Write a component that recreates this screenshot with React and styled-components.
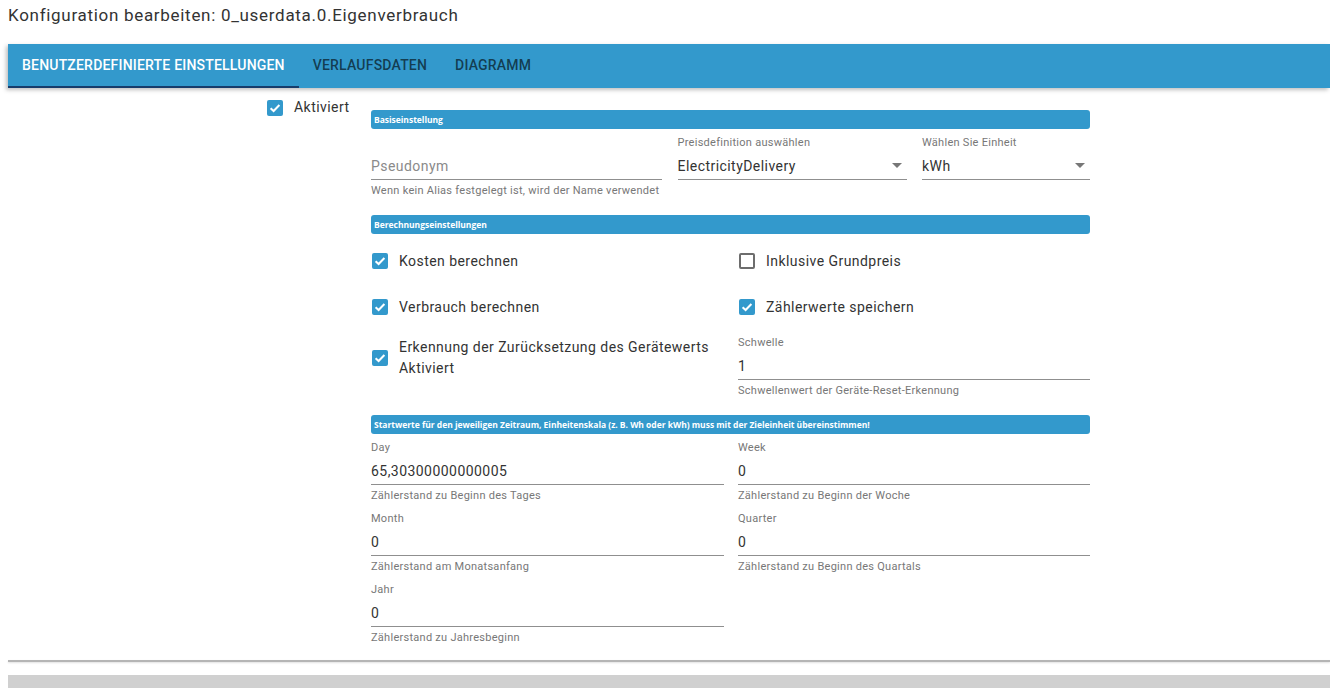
import React from 'react';
import styled, { createGlobalStyle } from 'styled-components';

const GlobalStyle = createGlobalStyle`
  body {
    margin: 0;
    background: #ffffff;
    font-family: Roboto, 'Liberation Sans', sans-serif;
    color: #333333;
  }
`;

const Page = styled.div`
  padding-left: 8px;
  width: 1322px;
  height: 688px;
  overflow: hidden;
`;

const Title = styled.div`
  font-size: 17px;
  letter-spacing: 0.7px;
  line-height: 30px;
  height: 44px;
  color: #333333;
`;

const TabBar = styled.div`
  display: flex;
  height: 44px;
  background: #3399cc;
  box-shadow: -2px 2px 4px rgba(0, 0, 0, 0.25);
`;

const Tab = styled.div`
  padding: 0 14px;
  font-size: 14px;
  font-weight: 500;
  letter-spacing: 0.2px;
  line-height: 42px;
  text-transform: uppercase;
  color: ${props => (props.active ? '#ffffff' : 'rgba(0, 0, 0, 0.62)')};
  border-bottom: ${props => (props.active ? '2px solid #173d6b' : '2px solid transparent')};
  box-sizing: border-box;
  height: 44px;
`;

const Content = styled.div`
  display: flex;
`;

const Sidebar = styled.div`
  width: 363px;
  flex-shrink: 0;
  padding: 9px 0 0 258px;
  box-sizing: border-box;
`;

const Form = styled.div`
  width: 719px;
  padding-top: 22px;
`;

const SectionHeader = styled.div`
  height: 19px;
  line-height: 19px;
  background: #3399cc;
  border-radius: 3px;
  color: #ffffff;
  font-family: 'Open Sans', sans-serif;
  font-weight: 700;
  font-size: 8.5px;
  letter-spacing: -0.02px;
  padding-left: 3px;
  margin-top: ${props => props.gap || 0}px;
  white-space: nowrap;
`;

const Row = styled.div`
  display: grid;
  grid-template-columns: ${props => props.cols};
  align-items: start;
  column-gap: ${props => props.colGap || 14}px;
  row-gap: ${props => props.rowGap || 0}px;
  padding-top: ${props => props.top || 0}px;
`;

const Field = styled.div`
  padding-bottom: 2px;
  margin-top: ${props => props.shift || 0}px;
`;

const FieldLabel = styled.div`
  margin-top: 7px;
  height: 14px;
  line-height: 14px;
  font-size: 11px;
  letter-spacing: 0.27px;
  color: #777777;
`;

const InputArea = styled.div`
  display: flex;
  align-items: center;
  justify-content: space-between;
  height: 30px;
  padding-top: 6px;
  padding-bottom: 4px;
  box-sizing: border-box;
  border-bottom: 1px solid #8f8f8f;
  margin-top: ${props => (props.noLabel ? 21 : 0)}px;
`;

const Value = styled.span`
  font-size: 14px;
  letter-spacing: 0.45px;
  line-height: 20px;
  color: ${props => (props.placeholder ? '#8a8a8a' : '#333333')};
`;

const Helper = styled.div`
  margin-top: 4px;
  height: 14px;
  line-height: 14px;
  font-size: 11px;
  letter-spacing: 0.27px;
  color: #777777;
  white-space: nowrap;
`;

const Arrow = styled.span`
  width: 0;
  height: 0;
  border-left: 5px solid transparent;
  border-right: 5px solid transparent;
  border-top: 5px solid #777777;
  margin-right: 5px;
`;

const CheckRow = styled.label`
  display: flex;
  align-items: center;
  min-height: ${props => props.h || 42}px;
  padding-top: ${props => props.pt || 0}px;
  margin-top: ${props => props.shift || 0}px;
`;

const Box = styled.span`
  flex-shrink: 0;
  width: 16px;
  height: 16px;
  box-sizing: border-box;
  border-radius: 2px;
  margin-left: 1px;
  display: flex;
  align-items: center;
  justify-content: center;
  background: ${props => (props.checked ? '#3399cc' : '#ffffff')};
  border: ${props => (props.checked ? 'none' : '2px solid #6d6d6d')};
`;

const CheckText = styled.span`
  margin-left: 11px;
  font-size: 14px;
  letter-spacing: 0.45px;
  line-height: 21px;
  color: #333333;
`;

const Divider = styled.div`
  margin-top: 13px;
  height: 2px;
  background: #b5b5b5;
  box-shadow: 0 1px 2px rgba(0, 0, 0, 0.12);
`;

const Footer = styled.div`
  margin-top: 13px;
  height: 20px;
  background: #d0d0d0;
`;

const Check = ({ checked }) => (
  <Box checked={checked}>
    {checked && (
      <svg width="14" height="14" viewBox="0 0 14 14">
        <path d="M2.6 7.2 L5.6 10 L11.4 4" fill="none" stroke="#ffffff" strokeWidth="2" />
      </svg>
    )}
  </Box>
);

const CheckItem = ({ checked, children, h, pt, shift }) => (
  <CheckRow h={h} pt={pt} shift={shift}>
    <Check checked={checked} />
    <CheckText>{children}</CheckText>
  </CheckRow>
);

const TextField = ({ label, value, placeholder, helper, select, shift }) => (
  <Field shift={shift}>
    {label && <FieldLabel>{label}</FieldLabel>}
    <InputArea noLabel={!label}>
      <Value placeholder={placeholder ? 1 : undefined}>{value || placeholder}</Value>
      {select && <Arrow />}
    </InputArea>
    {helper && <Helper>{helper}</Helper>}
  </Field>
);

const startValues = [
  { label: 'Day', value: '65,30300000000005', helper: 'Zählerstand zu Beginn des Tages' },
  { label: 'Week', value: '0', helper: 'Zählerstand zu Beginn der Woche' },
  { label: 'Month', value: '0', helper: 'Zählerstand am Monatsanfang' },
  { label: 'Quarter', value: '0', helper: 'Zählerstand zu Beginn des Quartals' },
  { label: 'Jahr', value: '0', helper: 'Zählerstand zu Jahresbeginn' },
];

const App = () => (
  <>
    <GlobalStyle />
    <Page>
      <Title>Konfiguration bearbeiten: 0_userdata.0.Eigenverbrauch</Title>
      <TabBar>
        <Tab active>Benutzerdefinierte Einstellungen</Tab>
        <Tab>Verlaufsdaten</Tab>
        <Tab>Diagramm</Tab>
      </TabBar>
      <Content>
        <Sidebar>
          <CheckRow h={20}>
            <Check checked />
            <CheckText>Aktiviert</CheckText>
          </CheckRow>
        </Sidebar>
        <Form>
          <SectionHeader>Basiseinstellung</SectionHeader>
          <Row cols="291px 229px 168px" colGap={15.5}>
            <TextField placeholder="Pseudonym" helper="Wenn kein Alias festgelegt ist, wird der Name verwendet" />
            <TextField label="Preisdefinition auswählen" value="ElectricityDelivery" select />
            <TextField label="Wählen Sie Einheit" value="kWh" select />
          </Row>

          <SectionHeader gap={15}>Berechnungseinstellungen</SectionHeader>
          <Row cols="353px 352px" top={6} rowGap={4}>
            <CheckItem checked>Kosten berechnen</CheckItem>
            <CheckItem>Inklusive Grundpreis</CheckItem>
            <CheckItem checked>Verbrauch berechnen</CheckItem>
            <CheckItem checked>Zählerwerte speichern</CheckItem>
            <CheckItem checked h={42} pt={8} shift={-3}>
              Erkennung der Zurücksetzung des Gerätewerts
              <br />
              Aktiviert
            </CheckItem>
            <TextField shift={-3} label="Schwelle" value="1" helper="Schwellenwert der Geräte-Reset-Erkennung" />
          </Row>

          <SectionHeader gap={15}>
            Startwerte für den jeweiligen Zeitraum, Einheitenskala (z. B. Wh oder kWh) muss mit der Zieleinheit übereinstimmen!
          </SectionHeader>
          <Row cols="353px 352px">
            {startValues.map(item => (
              <TextField key={item.label} label={item.label} value={item.value} helper={item.helper} />
            ))}
          </Row>
        </Form>
      </Content>
      <Divider />
      <Footer />
    </Page>
  </>
);

export default App;
